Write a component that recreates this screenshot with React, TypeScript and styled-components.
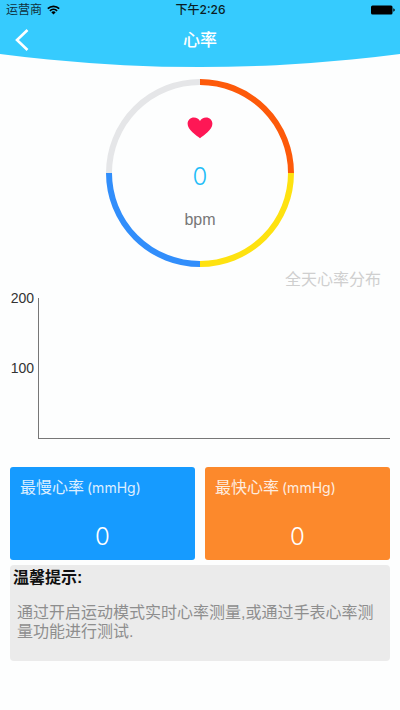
import React from 'react';
import styled, { createGlobalStyle } from 'styled-components';

const GlobalStyle = createGlobalStyle`
  * {
    box-sizing: border-box;
  }
  body {
    margin: 0;
    background: #fdfefe;
    color: #111;
    font-family: "Liberation Sans", "Noto Sans CJK SC", sans-serif;
  }
  h1, h2, p {
    margin: 0;
    font-weight: 400;
  }
`;

const Screen = styled.div`
  min-height: 100vh;
  display: flex;
  flex-direction: column;
`;

const Header = styled.header`
  height: 67px;
  background: #36cbfe;
  clip-path: circle(1546px at 50% -1479px);
`;

const StatusBar = styled.div`
  height: 20px;
  padding: 0 5px 0 6px;
  display: grid;
  grid-template-columns: 1fr auto 1fr;
  align-items: center;
  color: #10303c;
  font-size: 12px;
  line-height: 20px;
`;

const Carrier = styled.div`
  display: flex;
  align-items: center;
  gap: 5px;
`;

const Clock = styled.time`
  color: #0b1d24;
  font-family: Inter, "Noto Sans CJK SC", sans-serif;
  font-weight: 500;
`;

const BatteryIcon = styled.svg`
  justify-self: end;
`;

const NavBar = styled.nav`
  height: 40px;
  padding: 0 10px;
  display: grid;
  grid-template-columns: 40px 1fr 40px;
  align-items: center;
`;

const BackButton = styled.button`
  width: 40px;
  height: 40px;
  padding: 0 0 0 4px;
  border: 0;
  background: none;
  display: flex;
  align-items: center;
  cursor: pointer;
`;

const Title = styled.h1`
  padding-top: 2px;
  text-align: center;
  color: #fff;
  font-size: 17px;
  line-height: 24px;
  font-weight: 500;
`;

const Gauge = styled.section`
  padding-top: 12px;
  display: grid;
  justify-items: center;
`;

const Ring = styled.svg`
  grid-area: 2 / 1;
`;

const Reading = styled.div`
  grid-area: 2 / 1;
  padding-top: 38px;
  display: flex;
  flex-direction: column;
  align-items: center;
`;

const BigNumber = styled.output<{ $color: string }>`
  color: ${(p) => p.$color};
  font-family: Inter, sans-serif;
  font-size: 24px;
  line-height: 32px;
  font-weight: 300;
  text-align: center;
`;

const Bpm = styled(BigNumber)`
  margin-top: 22px;
`;

const Unit = styled.span`
  margin-top: 17px;
  color: #777;
  font-size: 16px;
  line-height: 20px;
`;

const ChartTitle = styled.h2`
  padding: 1px 19px 0;
  text-align: right;
  color: #cfcfcf;
  font-size: 16px;
  line-height: 24px;
`;

const Chart = styled.section`
  margin: 6px 10px 28px 0;
  display: grid;
  grid-template-columns: 34px 1fr;
  column-gap: 4px;
`;

const Ticks = styled.div`
  display: grid;
  grid-template-rows: 70px 71px;
  text-align: right;
  color: #333;
  font-size: 14px;
  line-height: 16px;
`;

const Tick = styled.span`
  margin-top: -8px;
`;

const Plot = styled.div`
  border: solid #777;
  border-width: 0 0 1px 1px;
`;

const Cards = styled.section`
  padding: 0 10px;
  display: grid;
  grid-template-columns: 1fr 1fr;
  gap: 10px;
`;

const Card = styled.article<{ $color: string }>`
  height: 93px;
  padding: 9px 10px 0;
  border-radius: 3px;
  background: ${(p) => p.$color};
  color: #fff;
  display: flex;
  flex-direction: column;
  gap: 21px;
`;

const CardTitle = styled.h2`
  font-size: 16px;
  line-height: 24px;
  opacity: 0.85;
  white-space: nowrap;
`;

const CardUnit = styled.span`
  margin-left: 3px;
  font-family: Inter, sans-serif;
  font-size: 14px;
`;

const Tips = styled.section`
  margin: 5px 10px 0;
  min-height: 96px;
  padding: 1px 3px 0;
  border-radius: 4px;
  background: #ebebeb;
`;

const TipsTitle = styled.h2`
  font-size: 16px;
  line-height: 24px;
  font-weight: 700;
`;

const TipsText = styled.p`
  padding: 13px 12px 0 4px;
  color: #8e8e8e;
  font-size: 16px;
  line-height: 19px;
`;

const quadrants = [
  { color: '#fd5a0a', d: 'M94 3A91 91 0 0 1 185 94' },
  { color: '#fee210', d: 'M185 94A91 91 0 0 1 94 185' },
  { color: '#318efb', d: 'M94 185A91 91 0 0 1 3 94' },
  { color: '#e5e6e8', d: 'M3 94A91 91 0 0 1 94 3' },
];

const stats = [
  { label: '最慢心率', value: 0, color: '#169bff' },
  { label: '最快心率', value: 0, color: '#fc892c' },
];

export default function App() {
  return (
    <Screen>
      <GlobalStyle />
      <Header>
        <StatusBar>
          <Carrier>
            <span>运营商</span>
            <svg width="13" height="10" viewBox="0 0 13 10" aria-hidden="true">
              <g fill="none" stroke="#000" strokeWidth="1.7">
                <path d="M0.8 3.6A8.2 8.2 0 0 1 12.2 3.6" />
                <path d="M2.9 5.8A5.2 5.2 0 0 1 10.1 5.8" />
              </g>
              <path d="M4.3 7.2A3.2 3.2 0 0 1 8.7 7.2L6.5 9.5Z" />
            </svg>
          </Carrier>
          <Clock>下午2:26</Clock>
          <BatteryIcon width="24" height="10" viewBox="0 0 24 10" aria-hidden="true">
            <rect x="0" y="0.5" width="21.5" height="9" rx="1.5" />
            <path d="M22.3 3.3Q23.8 3.8 23.8 5T22.3 6.7Z" />
          </BatteryIcon>
        </StatusBar>
        <NavBar>
          <BackButton aria-label="返回">
            <svg width="16" height="24" viewBox="0 0 16 24" aria-hidden="true">
              <path d="M13.5 2L3 12L13.5 22" fill="none" stroke="#fff" strokeWidth="2.6" />
            </svg>
          </BackButton>
          <Title>心率</Title>
        </NavBar>
      </Header>

      <main>
        <Gauge>
          <Ring width="188" height="188" viewBox="0 0 188 188" aria-hidden="true">
            {quadrants.map((q) => (
              <path key={q.color} d={q.d} fill="none" stroke={q.color} strokeWidth="6" />
            ))}
          </Ring>
          <Reading>
            <svg width="26" height="22" viewBox="0 0 26 22" aria-hidden="true">
              <path
                fill="#fe1755"
                d="M13 21.3C9.5 18.6 0.6 13 0.6 6.8C0.6 3 3.4 0.4 6.9 0.4C9.6 0.4 11.8 1.8 13 4C14.2 1.8 16.4 0.4 19.1 0.4C22.6 0.4 25.4 3 25.4 6.8C25.4 13 16.5 18.6 13 21.3Z"
              />
            </svg>
            <Bpm $color="#22bdf8">0</Bpm>
            <Unit>bpm</Unit>
          </Reading>
        </Gauge>

        <ChartTitle>全天心率分布</ChartTitle>
        <Chart aria-label="全天心率分布">
          <Ticks>
            <Tick>200</Tick>
            <Tick>100</Tick>
          </Ticks>
          <Plot />
        </Chart>

        <Cards>
          {stats.map((s) => (
            <Card key={s.label} $color={s.color}>
              <CardTitle>
                {s.label}
                <CardUnit>(mmHg)</CardUnit>
              </CardTitle>
              <BigNumber $color="#fff">{s.value}</BigNumber>
            </Card>
          ))}
        </Cards>

        <Tips>
          <TipsTitle>温馨提示:</TipsTitle>
          <TipsText>通过开启运动模式实时心率测量,或通过手表心率测量功能进行测试.</TipsText>
        </Tips>
      </main>
    </Screen>
  );
}
